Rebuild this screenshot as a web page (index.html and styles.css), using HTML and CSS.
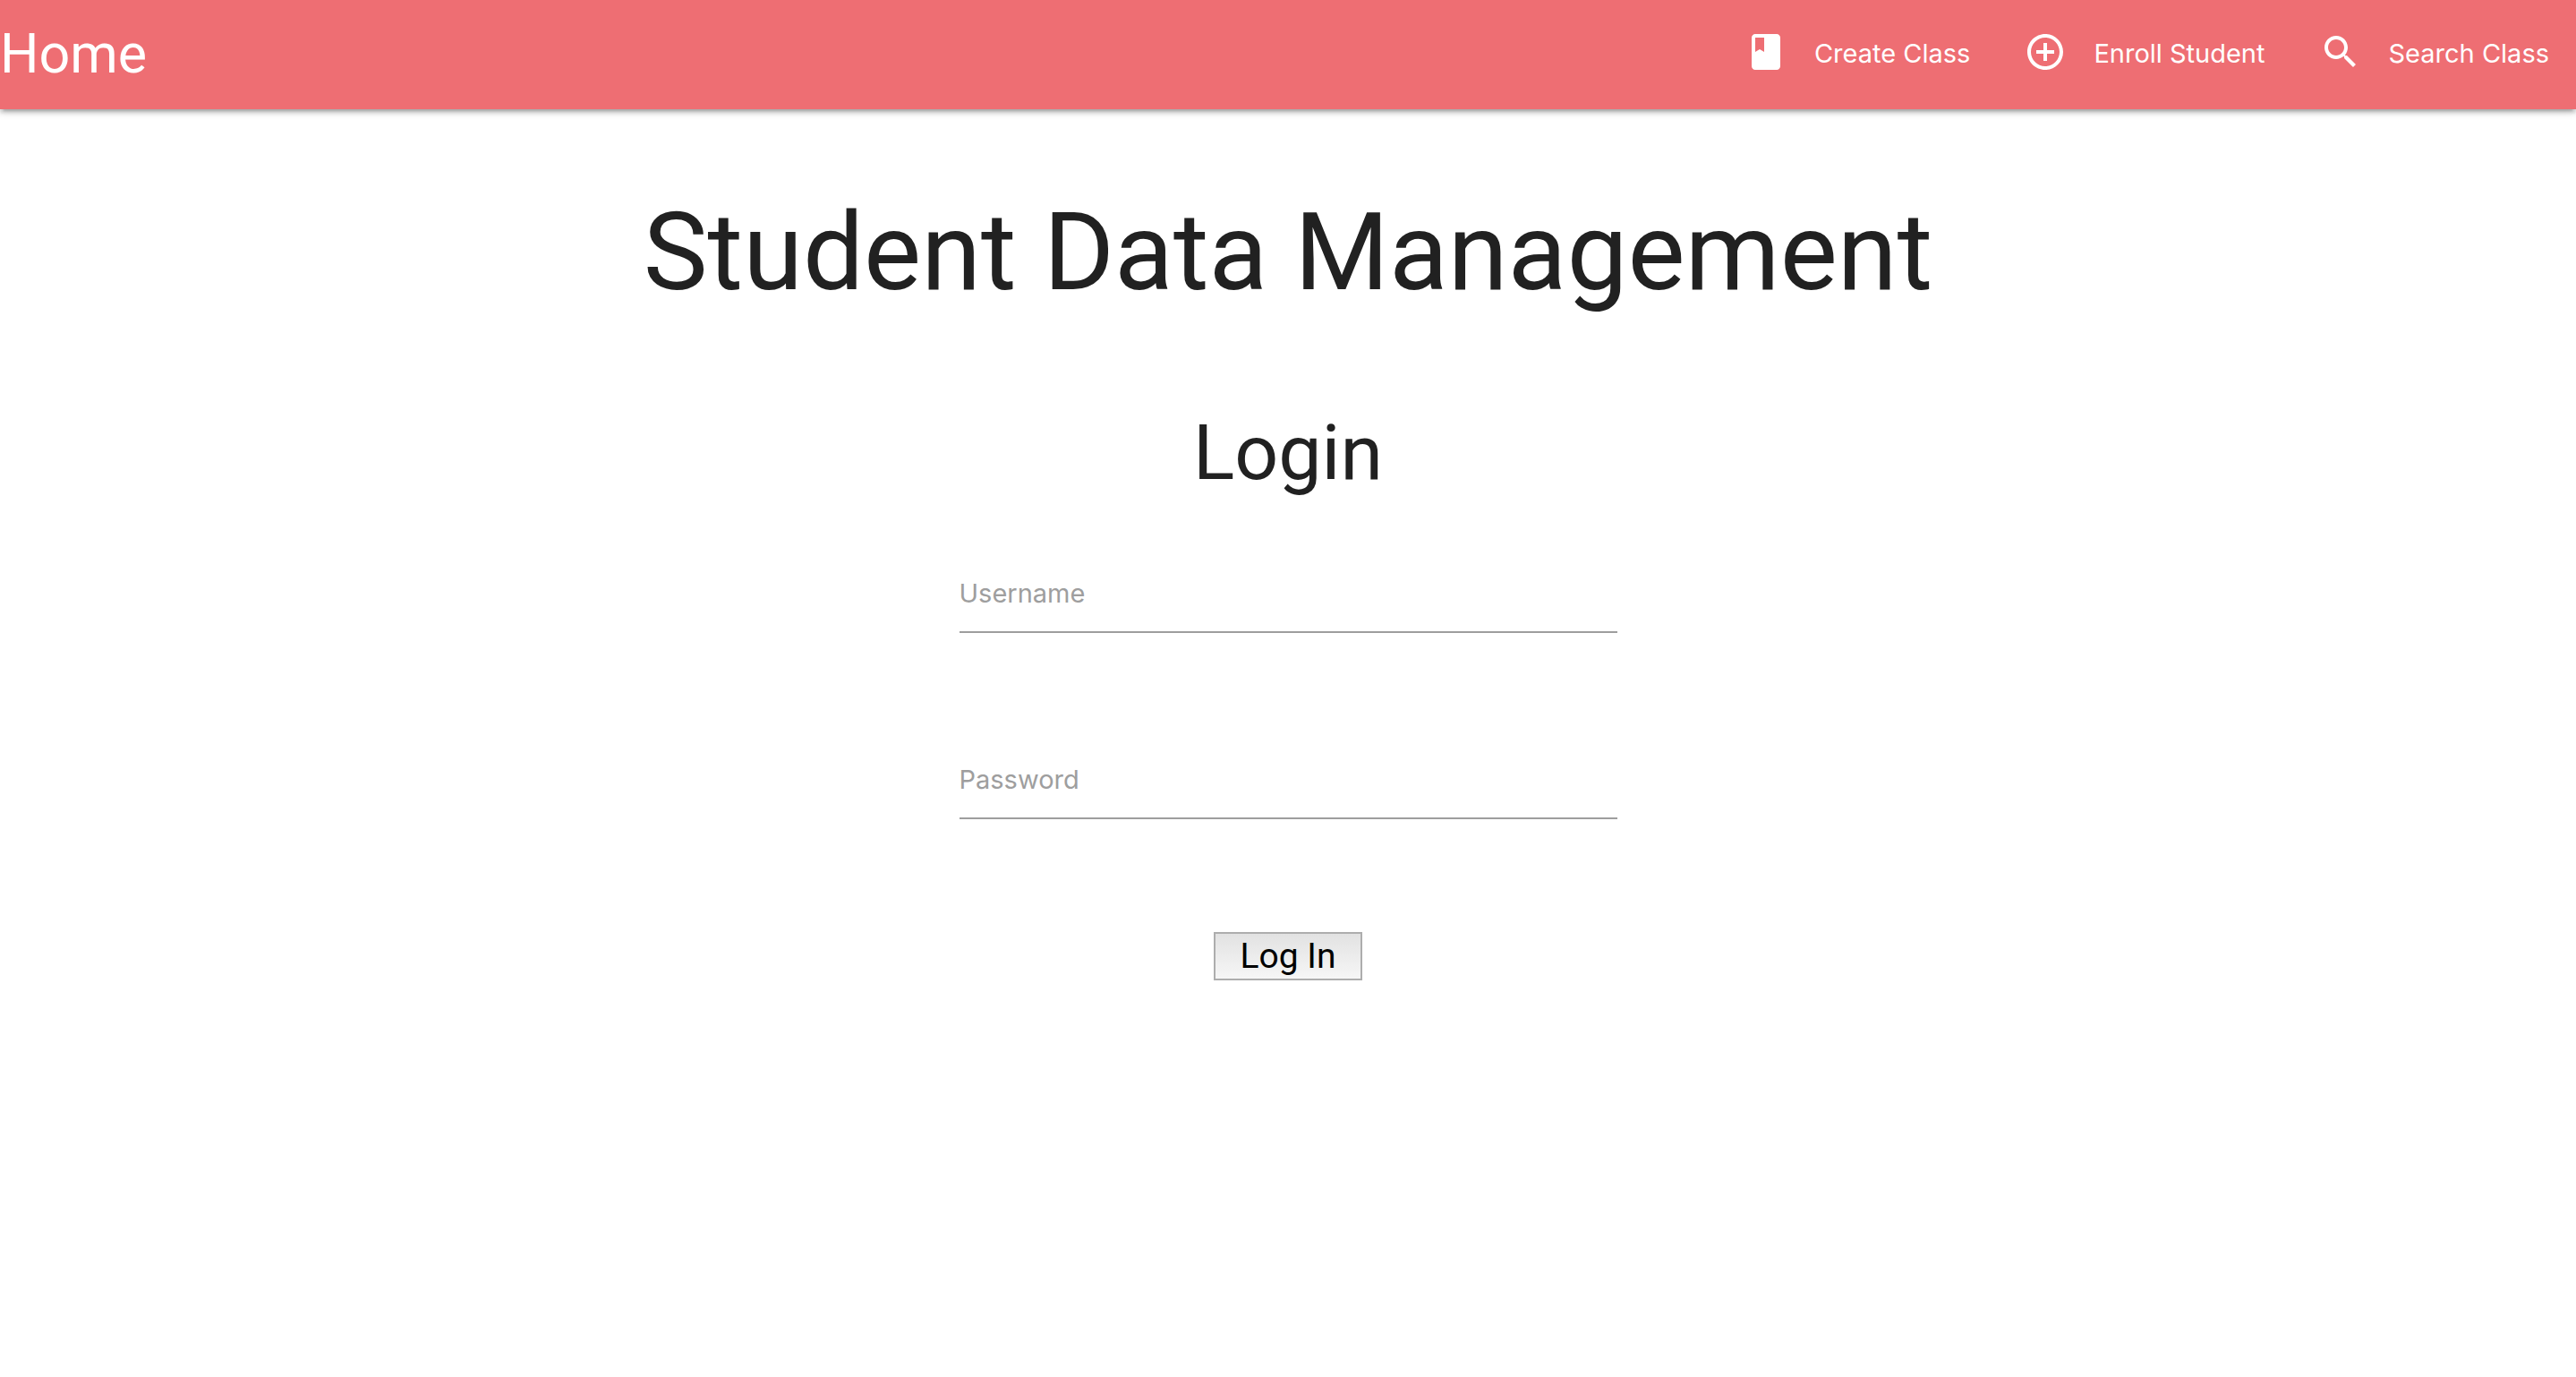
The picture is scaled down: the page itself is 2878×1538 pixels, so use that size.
FILE: index.html
```html
<!DOCTYPE html>
<html lang="en">
<head>
  <meta charset="utf-8">
  <meta name="viewport" content="width=device-width, initial-scale=1">
  <title>Student Data Management</title>
  <link rel="stylesheet" href="styles.css">
</head>
<body>
  <nav class="navbar">
    <a class="brand" href="#">Home</a>
    <ul class="nav-links">
      <li><a class="nav-link" href="#">
        <svg class="nav-icon" viewBox="0 0 24 24" aria-hidden="true"><path d="M18 2H6c-1.1 0-2 .9-2 2v16c0 1.1.9 2 2 2h12c1.1 0 2-.9 2-2V4c0-1.1-.9-2-2-2zM6 4h5v8l-2.5-1.5L6 12V4z"/></svg>
        <span>Create Class</span></a></li>
      <li><a class="nav-link" href="#">
        <svg class="nav-icon" viewBox="0 0 24 24" aria-hidden="true"><path d="M13 7h-2v4H7v2h4v4h2v-4h4v-2h-4V7zm-1-5C6.48 2 2 6.48 2 12s4.48 10 10 10 10-4.48 10-10S17.52 2 12 2zm0 18c-4.41 0-8-3.59-8-8s3.59-8 8-8 8 3.59 8 8-3.59 8-8 8z"/></svg>
        <span>Enroll Student</span></a></li>
      <li><a class="nav-link" href="#">
        <svg class="nav-icon" viewBox="0 0 24 24" aria-hidden="true"><path d="M15.5 14h-.79l-.28-.27C15.41 12.59 16 11.11 16 9.5 16 5.91 13.09 3 9.5 3S3 5.91 3 9.5 5.91 16 9.5 16c1.61 0 3.09-.59 4.23-1.57l.27.28v.79l5 4.99L20.49 19l-4.99-5zm-6 0C7.01 14 5 11.99 5 9.5S7.01 5 9.5 5 14 7.01 14 9.5 11.99 14 9.5 14z"/></svg>
        <span>Search Class</span></a></li>
    </ul>
  </nav>
  <main class="page">
    <h1 class="title">Student Data Management</h1>
    <h2 class="subtitle">Login</h2>
    <form class="login-form">
      <input class="field" type="text" aria-label="Username" placeholder="Username">
      <input class="field" type="password" aria-label="Password" placeholder="Password">
      <button class="submit" type="button">Log In</button>
    </form>
  </main>
</body>
</html>
```
FILE: styles.css
```css
* {
  box-sizing: border-box;
}

body {
  margin: 0;
  background: #fff;
  color: #212121;
  font-family: Inter, "Liberation Sans", sans-serif;
  font-size: 29px;
}

.navbar {
  display: flex;
  justify-content: space-between;
  align-items: flex-start;
  padding-bottom: 2px;
  background: #ee6e73;
  box-shadow: 0 4px 4px 0 rgba(0, 0, 0, 0.14), 0 6px 2px -4px rgba(0, 0, 0, 0.12), 0 2px 10px 0 rgba(0, 0, 0, 0.2);
}

.brand,
.title,
.subtitle,
.submit {
  font-family: Roboto, "Liberation Sans", sans-serif;
  font-weight: 400;
}

.brand {
  color: #fff;
  font-size: 61px;
  line-height: 120px;
  text-decoration: none;
}

.nav-links {
  display: flex;
  margin: 0;
  padding: 0;
  list-style: none;
}

.nav-link {
  display: flex;
  align-items: center;
  gap: 30px;
  padding: 0 30px;
  color: #fff;
  line-height: 120px;
  text-decoration: none;
}

.nav-icon {
  width: 48px;
  height: 48px;
  margin-bottom: 4px;
  fill: currentColor;
}

.page {
  display: flex;
  flex-direction: column;
  align-items: center;
}

.title {
  margin: 88px 0 0;
  font-size: 121px;
  line-height: 144px;
  text-align: center;
}

.subtitle {
  margin: 104px 0 0;
  font-size: 86px;
  line-height: 96px;
}

.login-form {
  display: flex;
  flex-direction: column;
  align-items: center;
  width: 735px;
  max-width: 100%;
}

.field {
  width: 100%;
  height: 88px;
  margin: 65px 0 55px;
  padding: 0;
  border: 0;
  border-bottom: 2px solid #9e9e9e;
  border-radius: 0;
  background: transparent;
  outline: none;
  color: inherit;
  font: inherit;
}

.field::placeholder {
  color: #9e9e9e;
  opacity: 1;
}

.submit {
  margin-top: 71px;
  padding: 0 28px;
  border: 2px solid #adadad;
  background: linear-gradient(#e2e2e2, #f6f6f6);
  color: #000;
  font-size: 39px;
  line-height: 50px;
}
```
